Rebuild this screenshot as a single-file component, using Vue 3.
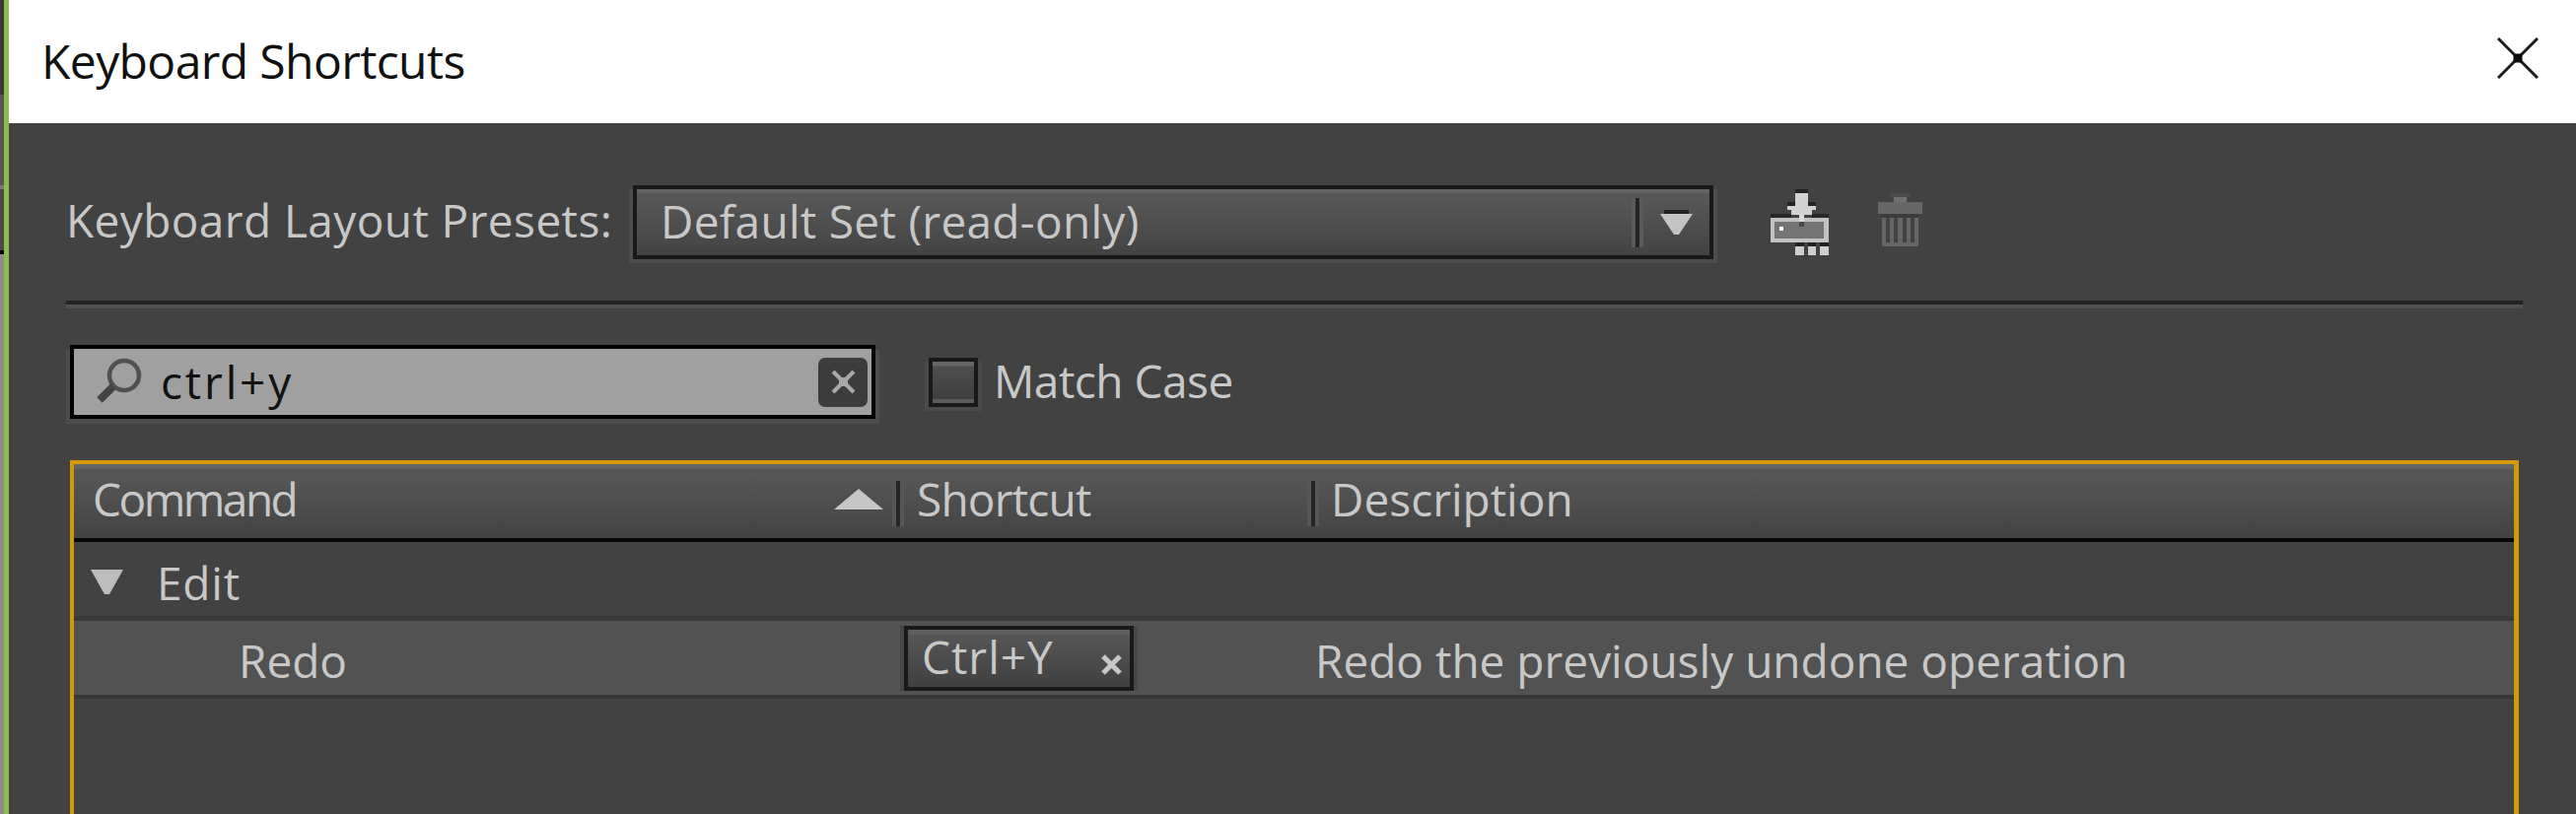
<template>
  <div class="window">
    <div class="edge"></div>
    <div class="dialog">
      <header class="title-bar">
        <span class="title">Keyboard Shortcuts</span>
        <svg class="close" width="42" height="42" viewBox="0 0 42 42">
          <path d="M1 1 L41 41 M41 1 L1 41" stroke="#1a1a1a" stroke-width="3" fill="none" />
          <rect x="16.5" y="16.5" width="9" height="9" fill="#0c0c0c" />
        </svg>
      </header>

      <main class="body">
        <div class="presets-row">
          <span class="label">Keyboard Layout Presets:</span>
          <div class="select">
            <span class="select-text">Default Set (read-only)</span>
            <span class="select-sep"></span>
            <svg class="select-arrow" width="33" height="25" viewBox="0 0 33 25">
              <path d="M4 0 H29 V4 H4 Z" fill="#222" />
              <path d="M0 4 H33 L19 25 H14 Z" fill="#c4c4c4" />
            </svg>
          </div>
          <svg class="preset-icons" width="220" height="110" viewBox="0 0 220 110" shape-rendering="crispEdges">
            <!-- save preset -->
            <rect x="36" y="47" width="21" height="4" fill="#262626" />
            <rect x="78" y="47" width="17" height="4" fill="#262626" />
            <rect x="36" y="51" width="59" height="25" fill="#c2c2c2" />
            <rect x="40" y="55" width="50" height="17" fill="#747474" />
            <rect x="45" y="60" width="4" height="4" fill="#fff" />
            <rect x="65" y="55" width="5" height="5" fill="#4a4a4a" />
            <rect x="61" y="22" width="13" height="4" fill="#222" />
            <rect x="53" y="35" width="8" height="4" fill="#222" />
            <rect x="74" y="35" width="8" height="4" fill="#222" />
            <rect x="61" y="26" width="13" height="22" fill="#d2d2d2" />
            <rect x="53" y="39" width="29" height="4" fill="#d2d2d2" />
            <rect x="57" y="43" width="21" height="5" fill="#d2d2d2" />
            <rect x="65" y="48" width="5" height="7" fill="#d8d8d8" />
            <rect x="61" y="76" width="9" height="4" fill="#222" />
            <rect x="74" y="76" width="8" height="4" fill="#222" />
            <rect x="86" y="76" width="9" height="4" fill="#222" />
            <rect x="61" y="80" width="9" height="9" fill="#cfcfcf" />
            <rect x="74" y="80" width="8" height="9" fill="#cfcfcf" />
            <rect x="86" y="80" width="9" height="9" fill="#cfcfcf" />
            <!-- delete preset -->
            <rect x="157" y="26" width="21" height="4" fill="#4c4c4c" />
            <rect x="161" y="30" width="13" height="5" fill="#707070" />
            <rect x="145" y="35" width="45" height="12" fill="#666" />
            <rect x="149" y="47" width="37" height="4" fill="#3a3a3a" />
            <rect x="149" y="51" width="4" height="29" fill="#666" />
            <rect x="157" y="51" width="4" height="25" fill="#666" />
            <rect x="165" y="51" width="5" height="25" fill="#666" />
            <rect x="174" y="51" width="4" height="25" fill="#666" />
            <rect x="182" y="51" width="4" height="29" fill="#666" />
            <rect x="149" y="76" width="37" height="4" fill="#666" />
          </svg>
        </div>

        <div class="separator"></div>

        <div class="search-row">
          <div class="search">
            <svg class="search-icon" width="48" height="48" viewBox="0 0 48 48">
              <circle cx="30" cy="18" r="15" fill="none" stroke="#505050" stroke-width="4.5" />
              <path d="M19 29 L5 43" stroke="#444" stroke-width="8" fill="none" />
            </svg>
            <span class="search-text">ctrl+y</span>
            <button class="clear">
              <svg width="25" height="25" viewBox="0 0 25 25">
                <path d="M2 2 L23 23 M23 2 L2 23" stroke="#a8a8a8" stroke-width="4" fill="none" />
                <rect x="8" y="8" width="9" height="9" fill="#a8a8a8" />
              </svg>
            </button>
          </div>
          <span class="checkbox"></span>
          <span class="label check-label">Match Case</span>
        </div>

        <div class="table">
          <div class="thead">
            <div class="th th-command">
              <span>Command</span>
              <svg class="sort" width="50" height="21" viewBox="0 0 50 21">
                <path d="M25 0 L50 21 H0 Z" fill="#c6c6c6" />
              </svg>
            </div>
            <div class="th th-shortcut"><span>Shortcut</span></div>
            <div class="th th-description"><span>Description</span></div>
          </div>

          <div class="row group-row">
            <svg class="twisty" width="33" height="25" viewBox="0 0 33 25">
              <path d="M0 0 H33 L19 25 H14 Z" fill="#bdbdbd" />
            </svg>
            <span class="cell-text">Edit</span>
          </div>

          <div v-for="item in commands" :key="item.name" class="row item-row">
            <span class="cell-text item-name">{{ item.name }}</span>
            <div class="shortcut-box">
              <span class="cell-text shortcut-text">{{ item.shortcut }}</span>
              <svg class="remove" width="21" height="21" viewBox="0 0 21 21">
                <path d="M2 2 L19 19 M19 2 L2 19" stroke="#c8c8c8" stroke-width="5" fill="none" />
              </svg>
            </div>
            <span class="cell-text item-desc">{{ item.description }}</span>
          </div>
        </div>
      </main>
    </div>
  </div>
</template>

<script setup>
const commands = [
  { name: 'Redo', shortcut: 'Ctrl+Y', description: 'Redo the previously undone operation' },
];
</script>

<style>
html,
body {
  margin: 0;
  background: #424242;
}
</style>

<style scoped>
.window {
  display: flex;
  width: 2613px;
  height: 826px;
  overflow: hidden;
  background: #424242;
  font-family: "Open Sans", "Liberation Sans", sans-serif;
}

.edge {
  flex: none;
  width: 4px;
  height: 100%;
  border-right: 5px solid #8fbb4d;
  background: linear-gradient(
    to bottom,
    #383838 0,
    #383838 96px,
    #565656 96px,
    #565656 188px,
    #7a7a7a 188px,
    #7a7a7a 192px,
    #4a4a4a 192px,
    #4a4a4a 254px,
    #000 254px,
    #000 258px,
    #8c8c8c 258px
  );
}

.dialog {
  flex: 1;
  min-width: 0;
  display: flex;
  flex-direction: column;
}

.title-bar {
  flex: none;
  height: 125px;
  background: #fff;
  display: flex;
  align-items: center;
  justify-content: space-between;
  padding: 0 38px 0 33px;
  box-sizing: border-box;
}

.title {
  font-size: 48px;
  line-height: 60px;
  color: #111;
  margin-top: -2px;
  letter-spacing: -0.6px;
}

.close {
  margin-top: -7px;
}

.body {
  flex: 1;
  padding: 59px 0 0 58px;
  min-height: 0;
}

.label {
  font-size: 46px;
  line-height: 60px;
  color: #c8c8c8;
  white-space: nowrap;
}

.presets-row {
  display: flex;
  align-items: flex-start;
  height: 121px;
}

.presets-row .label {
  margin-top: 9px;
  width: 575px;
  flex: none;
  letter-spacing: 0.4px;
}

.select {
  flex: none;
  width: 1096px;
  height: 75px;
  box-sizing: border-box;
  margin-top: 4px;
  border: 4px solid #191919;
  box-shadow: 0 4px 0 #4d4d4d, -4px 4px 0 #4d4d4d, 4px 4px 0 #4d4d4d;
  background: linear-gradient(to bottom, #646464 0, #646464 3px, #595959 4px, #434343 100%);
  display: flex;
  align-items: center;
  padding-left: 24px;
}

.select-text {
  flex: 1;
  font-size: 46px;
  line-height: 60px;
  color: #c8c8c8;
  white-space: nowrap;
  letter-spacing: 0.3px;
  margin-top: -3px;
}

.select-sep {
  flex: none;
  width: 4px;
  height: 50px;
  background: #242424;
  box-shadow: -4px 0 0 #5a5a5a, 4px 0 0 #5a5a5a;
  margin-right: 21px;
}

.select-arrow {
  flex: none;
  margin-right: 17px;
}

.preset-icons {
  flex: none;
  margin: -14px 0 0 22px;
}

.separator {
  width: 2492px;
  height: 4px;
  background: #232323;
  border-bottom: 4px solid #505050;
}

.search-row {
  display: flex;
  align-items: center;
  height: 75px;
  margin-top: 37px;
}

.search {
  flex: none;
  position: relative;
  width: 817px;
  height: 75px;
  margin-left: 4px;
  box-sizing: border-box;
  border: 4px solid #030303;
  box-shadow: 0 5px 0 #4d4d4d, -4px 5px 0 #4d4d4d, 4px 5px 0 #4d4d4d;
  background: #a0a0a0;
  display: flex;
  align-items: center;
}

.search-icon {
  flex: none;
  margin: -2px 0 0 21px;
}

.search-text {
  flex: 1;
  font-size: 46px;
  line-height: 60px;
  color: #111;
  margin: -2px 0 0 19px;
  letter-spacing: 2.8px;
}

.clear {
  flex: none;
  width: 50px;
  height: 50px;
  margin-right: 4px;
  padding: 0;
  border: none;
  border-radius: 7px;
  background: #3c3c3c;
  display: flex;
  align-items: center;
  justify-content: center;
}

.checkbox {
  flex: none;
  box-sizing: border-box;
  width: 50px;
  height: 50px;
  margin-left: 54px;
  border: 4px solid #191919;
  box-shadow: 0 4px 0 #4b4b4b, -4px 4px 0 #4b4b4b, 4px 4px 0 #4b4b4b;
  background: linear-gradient(to bottom, #666 0, #666 4px, #4f4f4f 5px, #3f3f3f 90%, #5c5c5c 90%);
}

.check-label {
  margin: -3px 0 0 16px;
  letter-spacing: -0.5px;
}

.table {
  width: 2484px;
  height: 400px;
  margin: 42px 0 0 4px;
  box-sizing: border-box;
  border: 4px solid #d29a05;
  border-right-width: 5px;
  border-bottom: none;
}

.thead {
  display: flex;
  height: 79px;
  box-sizing: border-box;
  border-bottom: 4px solid #060606;
  background: linear-gradient(to bottom, #666 0, #666 4px, #585858 5px, #434343 100%);
}

.th {
  position: relative;
  display: flex;
  align-items: center;
  box-sizing: border-box;
  font-size: 46px;
  line-height: 60px;
  color: #c8c8c8;
}

.th-command {
  width: 834px;
  padding: 0 0 5px 19px;
  letter-spacing: -2.5px;
}

.sort {
  position: absolute;
  left: 771px;
  top: 25px;
}

.th-shortcut {
  width: 421px;
  padding: 0 0 10px 17px;
  border-left: 4px solid #262626;
  height: 46px;
  margin-top: 17px;
  letter-spacing: -0.8px;
}

.th-description {
  flex: 1;
  padding: 0 0 10px 16px;
  border-left: 4px solid #262626;
  height: 46px;
  margin-top: 17px;
}

.th-shortcut::before,
.th-description::before {
  content: "";
  position: absolute;
  left: -8px;
  top: 0;
  width: 4px;
  height: 46px;
  box-shadow: 8px 0 0 #565656;
  background: #565656;
}

.row {
  display: flex;
  align-items: center;
  box-sizing: border-box;
}

.group-row {
  height: 80px;
  border-bottom: 5px solid #3a3a3a;
  padding: 6px 0 0 17px;
}

.twisty {
  flex: none;
  margin-right: 34px;
}

.cell-text {
  font-size: 46px;
  line-height: 60px;
  color: #c8c8c8;
  white-space: nowrap;
}

.group-row .cell-text {
  letter-spacing: 0.8px;
}

.item-row {
  height: 79px;
  background: #525252;
  border-bottom: 4px solid #383838;
}

.item-name {
  flex: none;
  width: 675px;
  margin: 4px 0 0 167px;
}

.shortcut-box {
  flex: none;
  position: relative;
  width: 233px;
  height: 66px;
  box-sizing: border-box;
  padding-left: 14px;
  border: 4px solid #191919;
  box-shadow: -4px 0 0 #474747, 4px 0 0 #474747;
  background: linear-gradient(to bottom, #606060 0, #606060 4px, #565656 5px, #414141 95%);
  display: flex;
  align-items: center;
  justify-content: space-between;
}

.shortcut-text {
  margin-top: -3px;
  letter-spacing: 1px;
}

.remove {
  margin: 14px 8px 0 0;
}

.item-desc {
  margin: 4px 0 0 184px;
}
</style>
